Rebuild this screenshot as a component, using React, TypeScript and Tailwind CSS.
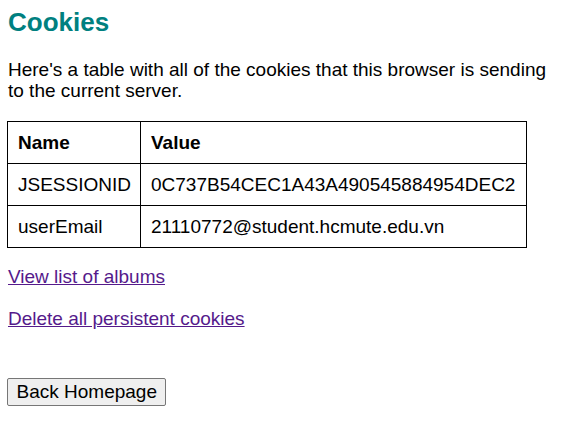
const cookies = [
  { name: 'JSESSIONID', value: '0C737B54CEC1A43A490545884954DEC2' },
  { name: 'userEmail', value: '21110772@student.hcmute.edu.vn' },
]

export default function App() {
  return (
    <div className="min-h-[426px] bg-white p-2 text-[19px] text-black font-['Liberation_Sans',Arial,sans-serif]">
      <h1 className="mt-0 text-[26px] leading-[28px] font-bold text-[#008080]">Cookies</h1>

      <p className="mt-[23px] leading-[21px]">
        Here's a table with all of the cookies that this browser is sending to the current server.
      </p>

      <table className="-ml-px mt-[20px] border-collapse border border-black">
        <thead>
          <tr>
            <th className="border border-black py-[10px] pl-[10px] pr-[9px] text-left leading-[21px] font-bold">Name</th>
            <th className="border border-black py-[10px] pl-[10px] pr-[11px] text-left leading-[21px] font-bold">Value</th>
          </tr>
        </thead>
        <tbody>
          {cookies.map((c) => (
            <tr key={c.name}>
              <td className="border border-black py-[10px] pl-[10px] pr-[9px] leading-[21px]">{c.name}</td>
              <td className="border border-black py-[10px] pl-[10px] pr-[11px] leading-[21px]">{c.value}</td>
            </tr>
          ))}
        </tbody>
      </table>

      <p className="mt-[18px] leading-[21px]">
        <a href="#" className="text-[#551a8b] underline">View list of albums</a>
      </p>
      <p className="mt-[21px] leading-[21px]">
        <a href="#" className="text-[#551a8b] underline">Delete all persistent cookies</a>
      </p>

      <div className="mt-[49px]">
        <button className="-ml-px rounded-[2px] border border-[#767676] bg-[#efefef] px-[8.5px] py-[2px] leading-[22px] text-black">
          Back Homepage
        </button>
      </div>
    </div>
  )
}
